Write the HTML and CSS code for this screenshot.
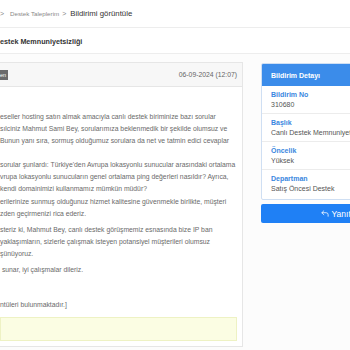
FILE: index.html
```html
<!DOCTYPE html>
<html lang="tr">
<head>
<meta charset="utf-8">
<title>Bildirimi görüntüle</title>
<link rel="stylesheet" href="styles.css">
</head>
<body>
<nav class="crumbs">
  <span class="sep sep-first">&gt;</span>
  <span class="crumb">Destek Taleplerim</span>
  <span class="sep">&gt;</span>
  <span class="current">Bildirimi görüntüle</span>
</nav>
<div class="titlebar"><h1 class="title">estek Memnuniyetsizliği</h1></div>
<div class="content">
  <section class="ticket">
    <header class="ticket-head">
      <span class="badge">en</span>
      <span class="date">06-09-2024 (12:07)</span>
    </header>
    <div class="ticket-body">
      <p class="para gap-l">eseller hosting satın almak amacıyla canlı destek biriminize bazı sorular<br>sılciniz Mahmut Sami Bey, sorularımıza beklenmedik bir şekilde olumsuz ve<br>Bunun yanı sıra, sormuş olduğumuz sorulara da net ve tatmin edici cevaplar</p>
      <p class="para gap-xs">sorular şunlardı: Türkiye'den Avrupa lokasyonlu sunucular arasındaki ortalama<br>vrupa lokasyonlu sunucuların genel ortalama ping değerleri nasıldır? Ayrıca,<br>kendi domainimizi kullanmamız mümkün müdür?</p>
      <p class="para gap-s">erilerinize sunmuş olduğunuz hizmet kalitesine güvenmekle birlikte, müşteri<br>zden geçirmenizi rica ederiz.</p>
      <p class="para gap-s">steriz ki, Mahmut Bey, canlı destek görüşmemiz esnasında bize IP ban<br>yaklaşımların, sizlerle çalışmak isteyen potansiyel müşterileri olumsuz<br>şünüyoruz.</p>
      <p class="para gap-m">&nbsp;sunar, iyi çalışmalar dileriz.</p>
      <p class="para gap-n">ntüleri bulunmaktadır.]</p>
      <div class="note"></div>
    </div>
  </section>
  <aside class="side">
    <div class="panel">
      <div class="panel-head">Bildirim Detayı</div>
      <div class="item"><div class="label">Bildirim No</div><div class="value">310680</div></div>
      <div class="item"><div class="label">Başlık</div><div class="value">Canlı Destek Memnuniyetsizliği</div></div>
      <div class="item"><div class="label">Öncelik</div><div class="value">Yüksek</div></div>
      <div class="item"><div class="label">Departman</div><div class="value">Satış Öncesi Destek</div></div>
    </div>
    <button class="reply" type="button"><svg class="reply-icon" viewBox="0 0 10 9" width="8" height="7"><path d="M3.5 1 L1 3.5 L3.5 6 M1 3.5 H6.5 A2.5 2.5 0 0 1 9 6 V8" fill="none" stroke="#fff" stroke-width="1" stroke-linecap="round" stroke-linejoin="round"/></svg>Yanıtla</button>
  </aside>
</div>
</body>
</html>
```
FILE: styles.css
```css
html, body {
  margin: 0;
  padding: 0;
}
body {
  width: 350px;
  height: 350px;
  overflow: hidden;
  background: #fcfcfc;
  font-family: "Liberation Sans", Arial, sans-serif;
  color: #555;
}
.crumbs {
  height: 28px;
  box-sizing: border-box;
  display: flex;
  align-items: center;
  gap: 2px;
  background: #fff;
  border-bottom: 1px solid #ededed;
  white-space: nowrap;
}
.sep {
  font-size: 7px;
  color: #888;
  margin: 0 2px 0 1px;
}
.sep-first {
  margin: 0 4px 0 0;
}
.crumb {
  font-size: 6.2px;
  color: #888;
}
.current {
  font-size: 7.8px;
  color: #333;
}
.titlebar {
  height: 26px;
  box-sizing: border-box;
  display: flex;
  align-items: center;
  padding-top: 1px;
  background: #fff;
  border-bottom: 1px solid #ededed;
}
.title {
  margin: 0;
  font-size: 7.2px;
  font-weight: bold;
  color: #333;
  white-space: nowrap;
}
.content {
  display: flex;
  align-items: flex-start;
  gap: 18px;
  padding-top: 8px;
  width: 600px;
}
.ticket {
  flex: 0 0 244px;
  min-width: 0;
  overflow: hidden;
  margin-left: -1px;
  background: #fff;
  border: 1px solid #e6e6e6;
  box-sizing: border-box;
}
.ticket-head {
  height: 23px;
  display: flex;
  align-items: center;
  justify-content: space-between;
  background: #f7f7f7;
  border-bottom: 1px solid #e6e6e6;
  padding-right: 5px;
}
.badge {
  background: #6b6b6b;
  color: #fff;
  font-size: 5.5px;
  line-height: 10px;
  padding: 0 2px 0 1px;
  margin-left: -1px;
}
.date {
  font-size: 6.8px;
  color: #666;
}
.ticket-body {
  padding: 24px 5px 5px 0;
}
.para {
  margin: 0;
  font-size: 6.8px;
  line-height: 12px;
  color: #6a6a6a;
  white-space: nowrap;
}
.gap-l { margin-bottom: 12px; }
.gap-xs { margin-bottom: 1px; }
.gap-s { margin-bottom: 4px; }
.gap-m { margin-bottom: 23px; }
.gap-n { margin-bottom: 6px; }
.note {
  height: 24px;
  background: #fbfde3;
  border: 1px solid #eef2c4;
  box-sizing: border-box;
}
.side {
  flex: 0 0 156px;
  min-width: 0;
  display: flex;
  flex-direction: column;
  gap: 4px;
  padding-top: 1px;
}
.panel {
  background: #fff;
  border: 1px solid #cfdff3;
  border-radius: 2px;
  overflow: hidden;
}
.panel-head {
  height: 22px;
  display: flex;
  align-items: center;
  padding-left: 9px;
  background: #3b8cea;
  color: #fff;
  font-size: 7px;
  font-weight: bold;
}
.item {
  padding: 4px 9px 3px;
  border-top: 1px solid #ececec;
  white-space: nowrap;
}
.panel-head + .item {
  border-top: none;
}
.item:last-child {
  padding-bottom: 5px;
}
.label {
  font-size: 7px;
  line-height: 10px;
  font-weight: bold;
  color: #3a87e0;
}
.value {
  font-size: 7px;
  line-height: 10px;
  color: #555;
}
.reply {
  height: 19px;
  display: flex;
  align-items: center;
  justify-content: center;
  gap: 3px;
  border: none;
  border-radius: 2px;
  background: #1f80f5;
  color: #fff;
  font-family: "Liberation Sans", Arial, sans-serif;
  font-size: 8.5px;
  padding: 0;
}
.reply-icon {
  display: block;
}
```
